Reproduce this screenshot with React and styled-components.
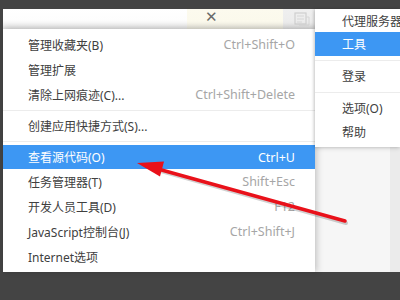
import React from "react";
import styled, { createGlobalStyle } from "styled-components";

const Global = createGlobalStyle`
  html, body { margin: 0; padding: 0; background: #444; }
  body { font-family: "Noto Sans", "Noto Sans CJK SC", sans-serif; }
`;

const Page = styled.div`
  position: relative;
  width: 400px;
  height: 300px;
  box-sizing: border-box;
  padding: 9px 0 0 3px;
  background: #444444;
  overflow: hidden;
`;

const Screen = styled.div`
  display: grid;
  grid-template-columns: 312px 85px;
  height: 263px;
`;

const LeftCol = styled.div`
  display: flex;
  flex-direction: column;
  min-height: 0;
`;

const RightCol = styled.div`
  display: flex;
  flex-direction: column;
  min-height: 0;
`;

const Toolbar = styled.div`
  display: grid;
  grid-template-columns: 184px 96px 32px;
  height: 20px;
  flex: none;
`;

const ToolSeg = styled.div`
  display: flex;
  align-items: center;
  justify-content: ${(p) => p.$justify || "flex-start"};
  padding-left: ${(p) => p.$pad || 0}px;
  background: ${(p) => p.$bg};
  color: #555;
`;

const Close = styled.span`
  font-family: "DejaVu Sans", sans-serif;
  font-size: 15px;
  font-weight: bold;
  color: #6a6a6a;
  line-height: 1;
  margin-top: -3px;
`;

const Menu = styled.div`
  position: relative;
  z-index: 1;
  flex: 1;
  background: #fff;
  padding: 3px 0 2px;
  box-shadow: 3px 0 6px rgba(0, 0, 0, 0.14), 0 -2px 5px rgba(0, 0, 0, 0.08);
`;

const Item = styled.div`
  display: flex;
  align-items: center;
  justify-content: space-between;
  height: ${(p) => p.$h || 25}px;
  padding: 0 ${(p) => p.$right ?? 20}px 0 ${(p) => p.$left ?? 25}px;
  font-size: 12px;
  white-space: nowrap;
  color: ${(p) => (p.$active ? "#fff" : "#404040")};
  background: ${(p) => (p.$active ? "#3d97f3" : "transparent")};
`;

const Shortcut = styled.span`
  color: ${(p) => (p.$active ? "#fff" : "#a6a6a6")};
  font-size: 12.5px;
`;

const Sep = styled.div`
  height: ${(p) => p.$h || 6}px;
  display: flex;
  align-items: center;
  &::after {
    content: "";
    flex: 1;
    height: 1px;
    background: #ececec;
  }
`;

const SubMenu = styled.div`
  position: relative;
  z-index: 2;
  background: #fff;
  padding: 0 0 3px;
  box-shadow: -1px 0 3px rgba(0, 0, 0, 0.18), 0 2px 4px rgba(0, 0, 0, 0.1);
  overflow: hidden;
`;

const Backdrop = styled.div`
  flex: 1;
  display: grid;
  grid-template-columns: 75px 10px;
  background: #f6f6f6;
`;

const Strip = styled.div`
  grid-column: 2;
  background: #ebebeb;
`;

const ArrowLayer = styled.svg`
  position: absolute;
  left: 0;
  top: 0;
  width: 400px;
  height: 300px;
  pointer-events: none;
  z-index: 5;
`;

const mainItems = [
  { t: "管理收藏夹(B)", s: "Ctrl+Shift+O" },
  { t: "管理扩展" },
  { t: "清除上网痕迹(C)...", s: "Ctrl+Shift+Delete" },
  { sep: 6 },
  { t: "创建应用快捷方式(S)..." },
  { sep: 7 },
  { t: "查看源代码(O)", s: "Ctrl+U", active: true, h: 24 },
  { t: "任务管理器(T)", s: "Shift+Esc" },
  { t: "开发人员工具(D)", s: "F12" },
  { t: "JavaScript控制台(J)", s: "Ctrl+Shift+J" },
  { t: "Internet选项" },
];

const subItems = [
  { t: "代理服务器", h: 23 },
  { t: "工具", active: true, h: 24 },
  { sep: 8 },
  { t: "登录", h: 24 },
  { sep: 8 },
  { t: "选项(O)", h: 24 },
  { t: "帮助", h: 24 },
];

export default function App() {
  return (
    <>
      <Global />
      <Page>
        <Screen>
          <LeftCol>
            <Toolbar>
              <ToolSeg $bg="linear-gradient(#ffffff 0%, #fdfdfd 55%, #e4e4e4 100%)" />
              <ToolSeg $bg="linear-gradient(#fcfaee 0%, #fbf9ec 60%, #e6e4da 100%)" $pad={18}>
                <Close>✕</Close>
              </ToolSeg>
              <ToolSeg $bg="linear-gradient(#efefef 0%, #ececec 60%, #dedede 100%)" $pad={11}>
                <svg width="16" height="14" viewBox="0 0 16 14">
                  <rect x="1" y="1" width="11" height="11" fill="none" stroke="#cfcfcf" strokeWidth="1.2" />
                  <path d="M3 4h7M3 7h7M3 10h5" stroke="#d6d6d6" strokeWidth="1" />
                  <path d="M12 5h3v8H5v-1" fill="none" stroke="#d6d6d6" strokeWidth="1" />
                </svg>
              </ToolSeg>
            </Toolbar>
            <Menu>
              {mainItems.map((it, i) =>
                it.sep ? (
                  <Sep key={i} $h={it.sep} />
                ) : (
                  <Item key={i} $active={it.active} $h={it.h}>
                    <span>{it.t}</span>
                    {it.s && <Shortcut $active={it.active}>{it.s}</Shortcut>}
                  </Item>
                )
              )}
            </Menu>
          </LeftCol>
          <RightCol>
            <SubMenu>
              {subItems.map((it, i) =>
                it.sep ? (
                  <Sep key={i} $h={it.sep} />
                ) : (
                  <Item key={i} $active={it.active} $h={it.h} $left={27} $right={0}>
                    <span>{it.t}</span>
                  </Item>
                )
              )}
            </SubMenu>
            <Backdrop>
              <Strip />
            </Backdrop>
          </RightCol>
        </Screen>
        <ArrowLayer viewBox="0 0 400 300">
          <line x1="346" y1="223" x2="161" y2="171" stroke="rgba(0,0,0,0.18)" strokeWidth="4" strokeLinecap="round" />
          <line x1="345" y1="221" x2="158" y2="169" stroke="#e9111a" strokeWidth="3.5" strokeLinecap="round" />
          <polygon points="137,163 164,161.5 160,176.5" fill="#e9111a" />
        </ArrowLayer>
      </Page>
    </>
  );
}
